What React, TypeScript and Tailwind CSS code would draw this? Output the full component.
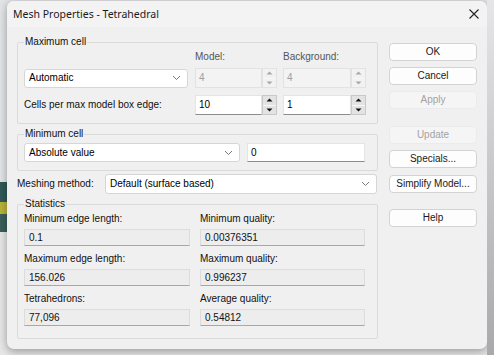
import React from "react";

const Chevron = () => (
  <svg width="9" height="6" viewBox="0 0 9 6" className="shrink-0">
    <path d="M1 1 L4.5 4.5 L8 1" fill="none" stroke="#7a7a7a" strokeWidth="1" />
  </svg>
);

const Combo = ({ text, className }: { text: string; className: string }) => (
  <div
    className={`flex items-center justify-between bg-white border border-[#d6d6d6] rounded-[3px] pl-[4px] pr-[6px] ${className}`}
  >
    <span className="text-[#000]">{text}</span>
    <Chevron />
  </div>
);

const Arrow = ({ up, color }: { up: boolean; color: string }) => (
  <svg width="7" height="4" viewBox="0 0 7 4">
    {up ? <path d="M0.5 3.5 L3.5 0.5 L6.5 3.5 Z" fill={color} /> : <path d="M0.5 0.5 L3.5 3.5 L6.5 0.5 Z" fill={color} />}
  </svg>
);

const Spinner = ({ value, disabled, w }: { value: string; disabled?: boolean; w: string }) => (
  <div className={`flex h-[20px] ${w}`}>
    <div
      className={
        disabled
          ? "flex-1 flex items-center pl-[3px] bg-[#f3f3f3] border border-[#e2e2e2] text-[#9d9d9d]"
          : "flex-1 flex items-center pl-[3px] bg-white border border-[#e4e4e4] border-b-[#8c8c8c] text-black"
      }
    >
      {value}
    </div>
    <div
      className={
        disabled
          ? "w-[15px] flex flex-col border border-[#e2e2e2] bg-[#f2f2f2]"
          : "w-[15px] flex flex-col border border-[#c9c9c9] bg-[#e3e3e3]"
      }
    >
      <div className="flex-1 flex items-center justify-center border-b border-[#f7f7f7]">
        <Arrow up color={disabled ? "#a8a8a8" : "#111"} />
      </div>
      <div className="flex-1 flex items-center justify-center">
        <Arrow up={false} color={disabled ? "#a8a8a8" : "#111"} />
      </div>
    </div>
  </div>
);

const Btn = ({ label, disabled, className }: { label: string; disabled?: boolean; className?: string }) => (
  <div
    className={`h-[18px] w-[88px] flex items-center justify-center rounded-[4px] ${
      disabled ? "bg-[#f5f5f5] border border-[#ebebeb] text-[#a3a3a3]" : "bg-[#fdfdfd] border border-[#d3d3d3] text-[#1a1a1a]"
    } ${className ?? ""}`}
  >
    {label}
  </div>
);

const StatField = ({ label, value, w }: { label: string; value: string; w: string }) => (
  <div className={`flex flex-col ${w}`}>
    <div className="h-[12px] leading-[12px] text-[#111]">{label}</div>
    <div className="mt-[4px] h-[17px] flex items-center pl-[4px] bg-[#ededed] border border-[#dcdcdc] border-b-[#a8a8a8] text-[#111]">
      {value}
    </div>
  </div>
);

export default function App() {
  return (
    <div className="w-[494px] h-[355px] overflow-hidden flex bg-[#e4e4e7] font-['Liberation_Sans',Arial,sans-serif] text-[10px] leading-[12px]">
      <div className="w-[7px] flex flex-col">
        <div className="h-[182px] bg-[#e2e4e6]" />
        <div className="h-[20px] bg-[#2f5a57]" />
        <div className="h-[12px] bg-[#b7b33a]" />
        <div className="h-[18px] bg-[#3b5f5a]" />
        <div className="flex-1 bg-[#e6e6e6]" />
      </div>
      <div className="flex flex-col pt-[1px]">
        <div className="w-[480px] h-[348px] bg-[#f0f0f0] rounded-[7px] shadow-[0_2px_8px_rgba(0,0,0,0.35)] flex flex-col overflow-hidden">
          {/* Title bar */}
          <div className="h-[26px] shrink-0 flex items-center justify-between pl-[6px] pr-[8px] bg-[#f3f3f4]">
            <span className="font-['Noto_Sans',Arial,sans-serif] text-[10.5px] text-[#1a1a1a]">Mesh Properties - Tetrahedral</span>
            <svg width="10" height="10" viewBox="0 0 10 10">
              <path d="M0.5 0.5 L9.5 9.5 M9.5 0.5 L0.5 9.5" stroke="#222" strokeWidth="1.1" />
            </svg>
          </div>
          {/* Body */}
          <div className="flex pl-[10px] pt-[9px]">
            <div className="w-[361px] flex flex-col">
              {/* Maximum cell */}
              <fieldset className="border border-[#dadada] rounded-[2px] pl-[6px] pr-[10px] pb-[8px]">
                <legend className="ml-[0px] px-[1px] h-[12px] leading-[12px] text-[#111]">Maximum cell</legend>
                <div className="flex pt-[3px] h-[15px]">
                  <div className="w-[171px]" />
                  <div className="w-[88px] text-[#555]">Model:</div>
                  <div className="text-[#555]">Background:</div>
                </div>
                <div className="flex items-center mt-[5px]">
                  <Combo text="Automatic" className="w-[164px] h-[19px]" />
                  <div className="w-[7px]" />
                  <Spinner value="4" disabled w="w-[82px]" />
                  <div className="w-[6px]" />
                  <Spinner value="4" disabled w="w-[83px]" />
                </div>
                <div className="flex items-center mt-[7px]">
                  <div className="w-[171px] text-[#111]">Cells per max model box edge:</div>
                  <Spinner value="10" w="w-[82px]" />
                  <div className="w-[6px]" />
                  <Spinner value="1" w="w-[83px]" />
                </div>
              </fieldset>
              {/* Minimum cell */}
              <fieldset className="mt-[4px] border border-[#dadada] rounded-[2px] pl-[6px] pr-[12px] pb-[8px]">
                <legend className="px-[1px] h-[12px] leading-[12px] text-[#111]">Minimum cell</legend>
                <div className="flex items-center pt-[3px]">
                  <Combo text="Absolute value" className="w-[216px] h-[19px]" />
                  <div className="w-[7px]" />
                  <div className="w-[118px] h-[19px] flex items-center pl-[3px] bg-white border border-[#e4e4e4] border-b-[#8c8c8c] text-black">
                    0
                  </div>
                </div>
              </fieldset>
              {/* Meshing method */}
              <div className="flex items-center mt-[3px]">
                <div className="w-[88px] text-[#111]">Meshing method:</div>
                <Combo text="Default (surface based)" className="w-[272px] h-[20px]" />
              </div>
              {/* Statistics */}
              <fieldset className="mt-[4px] border border-[#dadada] rounded-[2px] pl-[6px] pr-[11px] pb-[12px]">
                <legend className="px-[1px] h-[12px] leading-[12px] text-[#111]">Statistics</legend>
                <div className="flex pt-[3px] gap-[10px]">
                  <div className="flex flex-col gap-[7px]">
                    <StatField label="Minimum edge length:" value="0.1" w="w-[166px]" />
                    <StatField label="Maximum edge length:" value="156.026" w="w-[166px]" />
                    <StatField label="Tetrahedrons:" value="77,096" w="w-[166px]" />
                  </div>
                  <div className="flex flex-col gap-[7px]">
                    <StatField label="Minimum quality:" value="0.00376351" w="w-[165px]" />
                    <StatField label="Maximum quality:" value="0.996237" w="w-[165px]" />
                    <StatField label="Average quality:" value="0.54812" w="w-[165px]" />
                  </div>
                </div>
              </fieldset>
            </div>
            {/* Buttons */}
            <div className="ml-[11px] flex flex-col pt-[7px]">
              <Btn label="OK" />
              <Btn label="Cancel" className="mt-[6px]" />
              <Btn label="Apply" disabled className="mt-[6px]" />
              <Btn label="Update" disabled className="mt-[17px]" />
              <Btn label="Specials..." className="mt-[6px]" />
              <Btn label="Simplify Model..." className="mt-[7px]" />
              <Btn label="Help" className="mt-[16px]" />
            </div>
          </div>
        </div>
      </div>
      <div className="flex-1 bg-gradient-to-b from-[#e6e6e8] to-[#a9a9ab]" />
    </div>
  );
}
